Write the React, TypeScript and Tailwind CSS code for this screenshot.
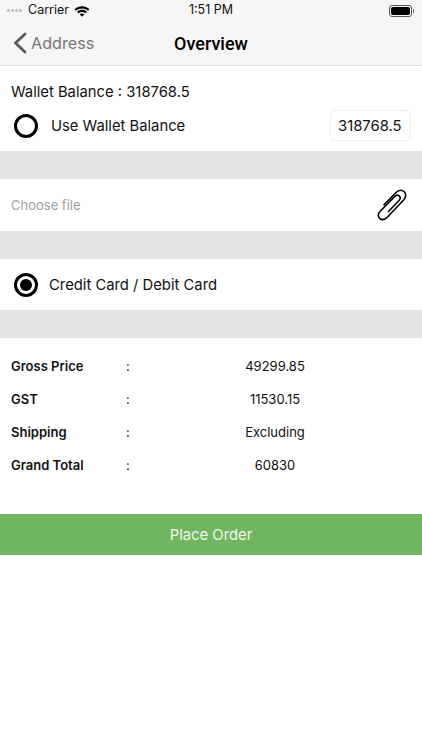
import React from 'react';

const font = "font-['Inter','Liberation_Sans',sans-serif]";

const Divider = () => <div className="h-[28px] bg-[#e3e3e3]" />;

const Radio = ({ checked }: { checked?: boolean }) => (
  <span className="flex h-[24px] w-[24px] shrink-0 items-center justify-center rounded-full border-[3px] border-black bg-white">
    {checked && <span className="h-[12px] w-[12px] rounded-full bg-black" />}
  </span>
);

const Wifi = () => (
  <svg width="16" height="12" viewBox="0 0 16 12" className="ml-[5px]">
    <path d="M0.5 4.2C4.7 0.2 11.3 0.2 15.5 4.2L14 5.8C10.6 2.6 5.4 2.6 2 5.8Z" fill="#000" />
    <path d="M3.1 6.8C5.9 4.2 10.1 4.2 12.9 6.8L11.4 8.3C9.4 6.5 6.6 6.5 4.6 8.3Z" fill="#000" />
    <path d="M5.7 9.3C7 8.2 9 8.2 10.3 9.3L8 11.7Z" fill="#000" />
  </svg>
);

const Battery = () => (
  <span className="flex items-center">
    <span className="flex h-[12px] w-[23px] items-center rounded-[3px] border border-[#555] p-[1px]">
      <span className="h-full w-full rounded-[2px] bg-black" />
    </span>
    <span className="ml-[1px] h-[4px] w-[1px] bg-[#777]" />
  </span>
);

const BackChevron = () => (
  <svg width="14" height="22" viewBox="0 0 14 22" fill="none" stroke="#5a5a5a" strokeWidth="2.8" strokeLinecap="round" strokeLinejoin="round" className="ml-[13px]">
    <path d="M12 2L2.5 11L12 20" />
  </svg>
);

const Paperclip = () => (
  <svg width="32" height="32" viewBox="0 0 32 32" fill="none" stroke="#000" strokeWidth="1.6" strokeLinecap="round" strokeLinejoin="round">
    <path d="M13.5 22.5L24 11.5C25.7 9.7 25.4 7.8 24.2 6.8C23 5.8 21.2 5.9 19.6 7.6L5.6 21.7C2.8 24.5 2.7 27.4 4.6 29.3C6.6 31.2 9.6 31 12.3 28.3L28.6 11C31.4 8 31.2 4.6 29 2.7C26.7 0.8 23.5 1 20.8 3.7L9 15.8" />
  </svg>
);

const rows = [
  { label: 'Gross Price', value: '49299.85' },
  { label: 'GST', value: '11530.15' },
  { label: 'Shipping', value: 'Excluding' },
  { label: 'Grand Total', value: '60830' },
];

export default function App() {
  return (
    <div className={`${font} h-[750px] w-[422px] overflow-hidden bg-white text-[#111]`}>
      {/* Nav */}
      <div className="h-[66px] border-b border-[#dedede] bg-[#f6f6f6]">
        <div className="relative flex h-[21px] items-center px-[7px] text-[12.5px]">
          <span className="flex items-center gap-[1px]">
            {[0, 1, 2, 3].map((i) => (
              <span key={i} className="h-[3px] w-[3px] rounded-full bg-[#bbb]" />
            ))}
          </span>
          <span className="ml-[6px]">Carrier</span>
          <Wifi />
          <span className="absolute left-0 right-0 text-center">1:51 PM</span>
          <span className="ml-auto pr-[1px]">
            <Battery />
          </span>
        </div>
        <div className="relative flex h-[44px] items-center">
          <BackChevron />
          <span className="ml-[4px] text-[16.2px] text-[#777]">Address</span>
          <span className="absolute left-0 right-0 text-center font-['Roboto',sans-serif] text-[18px] font-medium text-black">
            Overview
          </span>
        </div>
      </div>

      {/* Wallet */}
      <div className="h-[85px] px-[11px] pt-[16px]">
        <div className="text-[14.8px] leading-[20px]">Wallet Balance : 318768.5</div>
        <div className="mt-[8px] flex items-center">
          <span className="ml-[3px]">
            <Radio />
          </span>
          <span className="ml-[13px] pt-[2px] text-[14.8px]">Use Wallet Balance</span>
          <span className="ml-auto flex h-[31px] w-[81px] items-center rounded-[5px] border border-[#ececec] pl-[7px] pt-[1px] text-[14.8px]">
            318768.5
          </span>
        </div>
      </div>
      <Divider />

      {/* File */}
      <div className="flex h-[52px] items-center justify-between pl-[11px] pr-[15px]">
        <span className="pt-[2px] text-[13px] text-[#a0a0a0]">Choose file</span>
        <Paperclip />
      </div>
      <Divider />

      {/* Payment */}
      <div className="flex h-[51px] items-center pl-[14px]">
        <Radio checked />
        <span className="ml-[11px] pt-[2px] text-[14.8px]">Credit Card / Debit Card</span>
      </div>
      <Divider />

      {/* Totals */}
      <div className="flex flex-col gap-[13px] px-[11px] pt-[19px]">
        {rows.map((row) => (
          <div key={row.label} className="flex h-[20px] items-center text-[13px]">
            <span className="w-[115px] font-semibold">{row.label}</span>
            <span className="w-[13px]">:</span>
            <span className="flex-1 text-center">{row.value}</span>
          </div>
        ))}
      </div>

      <div className="mt-[38px] flex h-[41px] items-center justify-center bg-[#70b560] pt-[2px] text-[14.8px] text-[#f2f8f0]">
        Place Order
      </div>
    </div>
  );
}
